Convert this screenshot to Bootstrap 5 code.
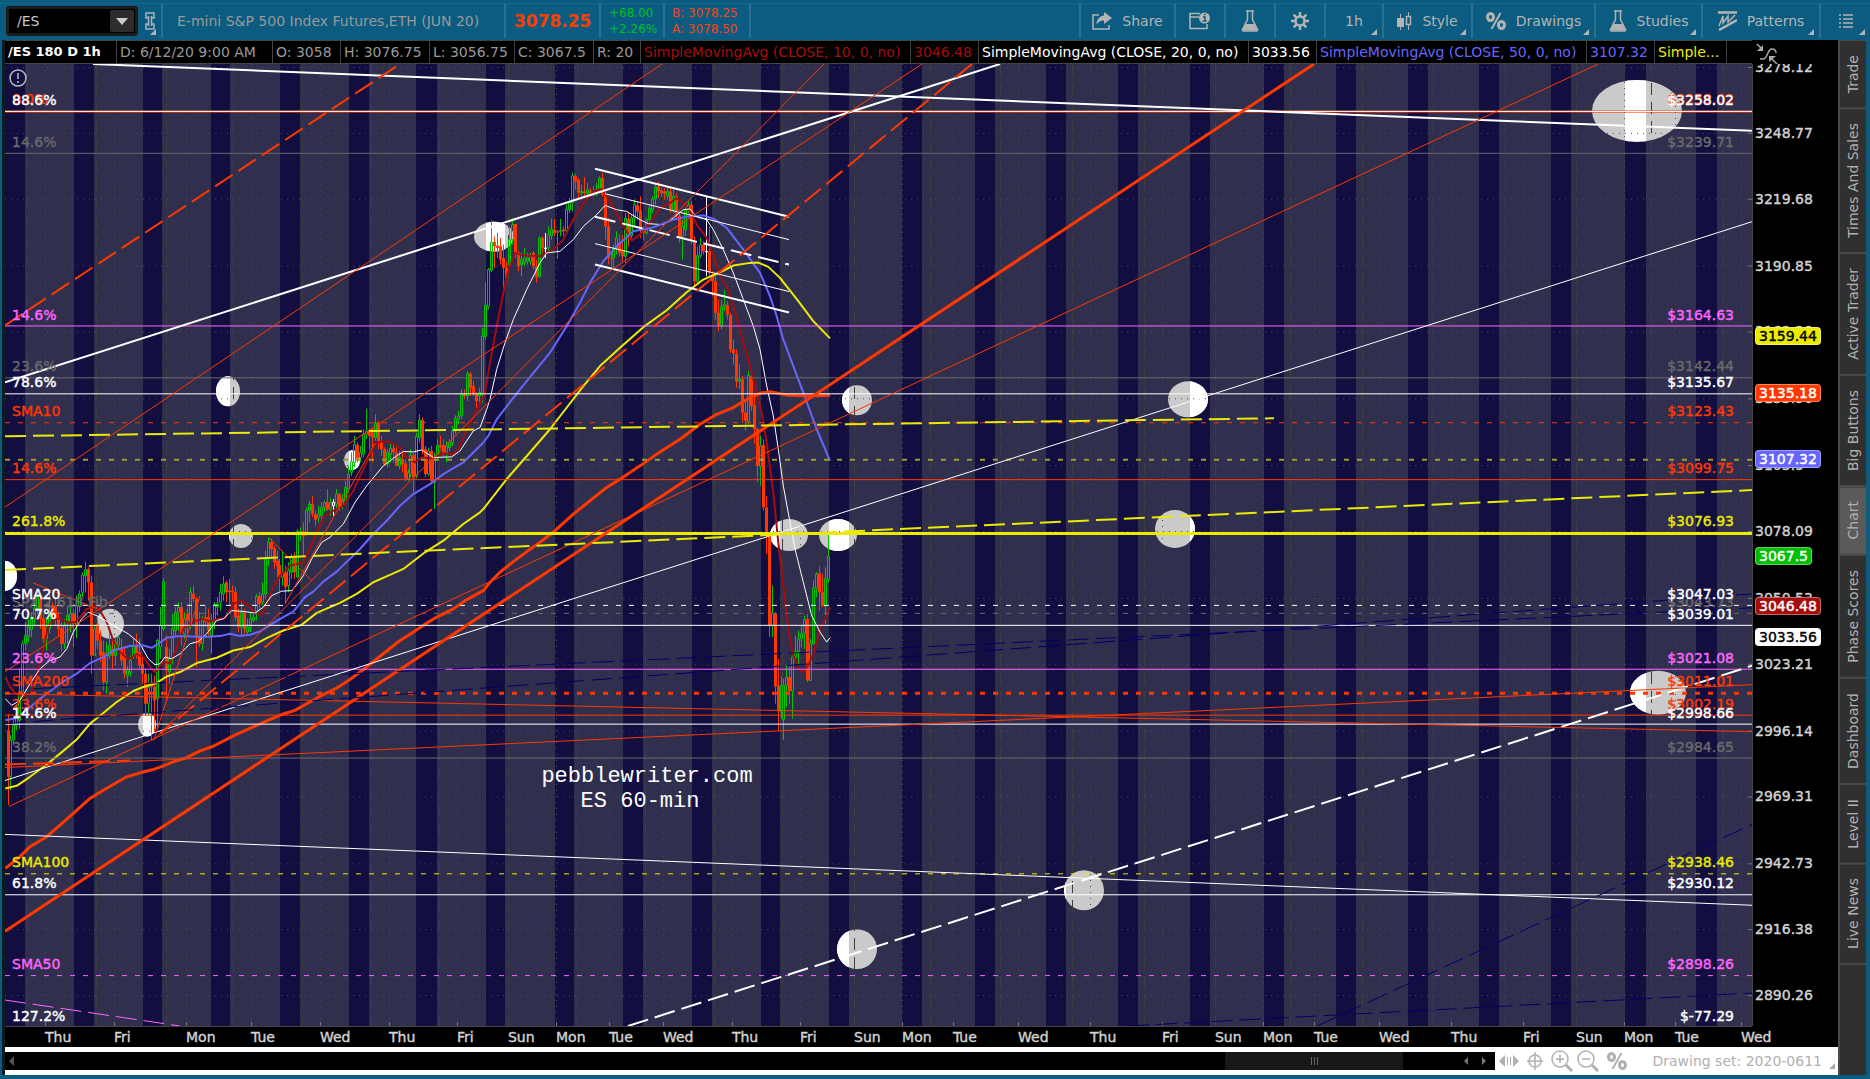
<!DOCTYPE html>
<html lang="en">
<head>
<meta charset="utf-8">
<meta name="viewport" content="width=device-width, initial-scale=1">
<title>/ES 180 D 1h chart</title>
<link href="https://cdn.jsdelivr.net/npm/bootstrap@5.3.0/dist/css/bootstrap.min.css" rel="stylesheet">
<style>
body{background:#0b5c80;color:#b4b4b4;font:14px/20px "DejaVu Sans",sans-serif;overflow:hidden}
.toolbar{height:40px;box-shadow:inset 0 3px 0 #0b5c80,inset 0 4px 0 #14678c}
.toolbar .tool{border:0;border-left:2px solid #2b7192;border-radius:0;background:none;color:#b4b4b4;padding:0;font:inherit;position:relative;height:34px;margin-top:4px;display:flex;align-items:center;justify-content:center;gap:10px;white-space:nowrap;flex:none}
.toolbar .more::after,.corner::after{content:"";position:absolute;right:5px;bottom:3px;border-left:6px solid transparent;border-bottom:6px solid #b4b4b4}
.symbol{width:132px;height:30px;margin:6px 0 0 6px;border:3px solid #1c1c1c;border-radius:3px;background:#000}
.symbol input{width:101px;border:0;background:none;color:#c8c8c8;padding:0 8px;outline:0}
.symbol button{width:24px;height:22px;margin-top:1px;border:0;border-radius:2px;background:#2d2d2d;padding:0;display:grid;place-items:center}
.w-link{width:23px;border:0!important}
.quote{border-left:2px solid #2b7192;height:34px;margin-top:4px;flex:none;display:flex;align-items:center;white-space:nowrap}
.q-name{width:343px;padding-left:14px;color:#999}
.q-last{width:95px;padding-left:8px;color:#ff3c00;font-size:17px}
.q-pair{width:64px;padding-left:8px;font-size:12px;line-height:16px}
.q-book{width:86px;padding-left:7px;font-size:12px;line-height:16px;color:#ff4012}
.green{color:#00c020}
.t-95{width:95px}.t-50{width:50px}.t-58{width:58px}.t-89{width:89px}.t-123{width:123px}.t-107{width:107px}.t-118{width:118px}.t-51{width:51px}
.frame{margin-left:2px;background:#000;border-left:3px solid #0c1a22}
.study-bar{height:24px;border-top:1px solid #444;border-bottom:1px solid #444;color:#999;overflow:hidden}
.study-bar>span{border-right:1px solid #444;padding-left:3px;line-height:22px;white-space:nowrap;flex:none;overflow:hidden}
.s-title{width:112px;color:#fff;font-size:13px}.s-date{width:156px}.s-68{width:68px}.s-89{width:89px}.s-85{width:85px}.s-79{width:79px}.s-47{width:47px}.s-avg{width:270px}.s-cut{width:72px}
.price-col{width:86px;flex:none}
.plot{position:relative;overflow:hidden}
.plot svg.drawing{position:absolute;width:100%;height:100%;left:0;top:0}
.drawing *{vector-effect:non-scaling-stroke}
.tag{position:absolute;line-height:16px;transform:translateY(-50%);white-space:nowrap;-webkit-text-stroke:.4px}
.tag-left{left:7px}.tag-right{right:18px}
.note{position:absolute;color:#fff;font:22px/26px "Liberation Mono",monospace;text-align:center;transform:translate(-50%,-50%);white-space:nowrap}
.prices{position:relative;overflow:hidden;border-left:1px solid #444;color:#d2d2d2}
.prices .tag{left:2px}
.prices .bubble{left:2px;padding:0 3px;border-radius:4px;border:1px solid #ffffff60}
.warn{position:absolute;left:4px;top:5px}
.dates{position:relative;height:21px;border-top:1px solid #444;color:#d2d2d2}
.dates span{position:absolute;top:0;line-height:20px;-webkit-text-stroke:.4px}
.foot{height:28px;background:#fff;color:#b0b0b0}
.scroller{height:18px;margin:5px 0;background:#000;position:relative}
.scroller .grip{position:absolute;left:81.9%;width:11.9%;height:18px;background:#181818;display:grid;place-items:center}
.scroller svg{position:absolute;top:4px}
.foot-tools{width:343px;flex:none;position:relative}
.foot-tools button{border:0;background:none;padding:0;line-height:0}
.foot-tools::after{right:3px;bottom:6px;border-bottom-color:#aaa}
.tabs{width:28px;flex:none;background:#303030;border-left:2px solid #4a4a4a;border-top:1px solid #4a4a4a;margin-right:4px}
.tabs a{writing-mode:vertical-rl;transform:rotate(180deg);width:26px;padding:14px 0;line-height:26px;color:#b0b0b0;text-decoration:none;border-top:2px solid #4a4a4a;display:block;text-align:center}
.tabs a.on{background:#5a5a5a}
</style>
<script src="https://cdn.jsdelivr.net/npm/bootstrap@5.3.0/dist/js/bootstrap.bundle.min.js"></script>
</head>
<body class="vh-100 d-flex flex-column">
<svg width="0" height="0" class="position-absolute">
  <symbol id="flask" viewBox="0 0 18 22"><path d="M5 1h8M6.500 1.500v8L1.500 19.500q-.5 1.500 1 1.500h13q1.500 0 1-1.500L11.500 9.500v-8" fill="none" stroke="#b4b4b4" stroke-width="1.500"/><path d="M4.500 14h9l3 6.500h-15z" fill="#b4b4b4"/></symbol>
</svg>
<header class="toolbar d-flex">
  <div class="symbol d-flex"><input aria-label="Symbol" value="/ES"><button type="button" aria-label="Symbol list"><svg width="12" height="7"><path d="M0 0h12L6 7z" fill="#ccc"/></svg></button></div>
  <button class="tool more w-link" type="button" aria-label="Link"><svg width="10" height="18" fill="none" stroke="#a8b4ba" stroke-width="1.500"><path d="M4 6H1V1h8v5H6M4 12H1v5h8v-5H6M3.500 4v10M6.500 4v10"/></svg></button>
  <div class="quote q-name">E-mini S&amp;P 500 Index Futures,ETH (JUN 20)</div>
  <div class="quote q-last fw-bold">3078.25</div>
  <div class="quote q-pair green">+68.00<br>+2.26%</div>
  <div class="quote q-book">B: 3078.25<br>A: 3078.50</div>
  <div class="quote flex-fill"></div>
  <button class="tool t-95" type="button"><svg width="20" height="18"><path d="M7 3H1v14h16v-4" fill="none" stroke="#b4b4b4" stroke-width="1.500"/><path d="M12 0l8 6-8 6V8.500C8 8.500 6 10 4.500 13 4.500 7 8 4 12 3.500z" fill="#b4b4b4"/></svg>Share</button>
  <button class="tool t-50" type="button" aria-label="Chart info"><svg width="22" height="18"><path d="M11 1.500H1v15h17V12M1 5h9" fill="none" stroke="#b4b4b4" stroke-width="1.500"/><circle cx="15.500" cy="6" r="5.500" fill="#b4b4b4"/><path d="M14 5h2v4m-2.500 0h4M15 2.500h1.500" stroke="#0b5c80" stroke-width="1.500" fill="none"/></svg></button>
  <button class="tool t-50" type="button" aria-label="Lab"><svg width="18" height="22"><use href="#flask"/></svg></button>
  <button class="tool t-50" type="button" aria-label="Settings"><svg width="18" height="18" viewBox="-9 -9 18 18" fill="none" stroke="#b4b4b4"><circle r="4.500" stroke-width="2.500"/><path d="M0-9v4M0 5v4M-9 0h4M5 0h4M-6.400-6.400l3 3M3.400 3.400l3 3M-6.400 6.400l3-3M3.400-3.400l3-3" stroke-width="2.500"/></svg></button>
  <button class="tool more t-58" type="button">1h</button>
  <button class="tool more t-89" type="button"><svg width="15" height="18"><path d="M3.500 2v16M11.500 0v18" stroke="#b4b4b4"/><path d="M0 6h7v9H0z" fill="#b4b4b4"/><path d="M9.500 4.500h4v8h-4z" fill="#0b5c80" stroke="#b4b4b4" stroke-width="1.500"/></svg>Style</button>
  <button class="tool more t-123" type="button"><svg width="20" height="18" fill="none" stroke="#b4b4b4" stroke-width="3"><ellipse cx="4.500" cy="5" rx="3" ry="3.500"/><ellipse cx="15.500" cy="13" rx="3" ry="3.500"/><path d="M14.500 1l-9 16" stroke-width="2"/></svg>Drawings</button>
  <button class="tool more t-107" type="button"><svg width="18" height="22"><use href="#flask"/></svg>Studies</button>
  <button class="tool more t-118" type="button"><svg width="19" height="20" fill="none" stroke="#b4b4b4"><path d="M0 1.500h19M1 19L19 9" stroke-width="2.500"/><path d="M1 15L5 5v7l5-7v6l7-7" stroke-width="1.500"/></svg>Patterns</button>
  <button class="tool more t-51" type="button" aria-label="Menu"><svg width="14" height="14" stroke="#b4b4b4" stroke-width="1.500"><path d="M0 1h2M4 1h10M0 5h2M4 5h10M0 9h2M4 9h10M0 13h2M4 13h10"/></svg></button>
</header>
<main class="d-flex flex-fill overflow-hidden">
  <section class="frame d-flex flex-column flex-fill">
    <div class="d-flex">
      <div class="study-bar d-flex flex-fill">
        <span class="s-title fw-bold">/ES 180 D 1h</span><span class="s-date">D: 6/12/20 9:00 AM</span><span class="s-68">O: 3058</span><span class="s-89">H: 3076.75</span><span class="s-85">L: 3056.75</span><span class="s-79">C: 3067.5</span><span class="s-47">R: 20</span>
        <span class="s-avg" data-c="#a50d0d">SimpleMovingAvg (CLOSE, 10, 0, no)</span><span class="s-68" data-c="#a50d0d">3046.48</span>
        <span class="s-avg" data-c="#fff">SimpleMovingAvg (CLOSE, 20, 0, no)</span><span class="s-68" data-c="#fff">3033.56</span>
        <span class="s-avg" data-c="#6666ff">SimpleMovingAvg (CLOSE, 50, 0, no)</span><span class="s-68" data-c="#6666ff">3107.32</span>
        <span class="s-cut" data-c="#ebeb00">Simple...</span>
      </div>
      <div class="price-col ps-1"><svg width="24" height="24" fill="none" stroke="#aaa" stroke-width="1.500"><path d="M4 19h3c5 0 4-10 9-10q4 0 4 4M1 4l5 5"/><path d="M7 5v6H1zM13 16h7l-7 6z" fill="#aaa" stroke="none"/><path d="M15 18l6 6"/></svg></div>
    </div>
    <div class="d-flex flex-fill">
      <div class="plot flex-fill" id="plot">
        <svg class="drawing" id="drawing" viewBox="5 64 1747 964" preserveAspectRatio="none"></svg>
        <svg class="warn" width="18" height="18" fill="none" stroke="#bbb" stroke-width="1.500"><circle cx="9" cy="9" r="8"/><path d="M9 4v6M9 12v2"/></svg>
      </div>
      <div class="price-col prices" id="prices"></div>
    </div>
    <div class="d-flex"><div class="dates flex-fill" id="dates"></div><div class="price-col"></div></div>
    <div class="foot d-flex">
      <div class="scroller flex-fill">
        <svg width="6" height="10" class="start-0 ms-1"><path d="M5 0v10L0 5z" fill="#555"/></svg>
        <div class="grip"><svg class="position-static" width="8" height="8" stroke="#666"><path d="M1.500 0v8M4.500 0v8M7.500 0v8"/></svg></div>
        <svg width="24" height="10" class="end-0 me-2"><path d="M5 1v8L1 5zM19 1v8L23 5z" fill="#777"/></svg>
      </div>
      <div class="foot-tools corner d-flex align-items-center ps-1">
        <button type="button" aria-label="Fit width"><svg width="20" height="12" fill="#b0b0b0"><path d="M6 0v12L0 6zM14 0v12L20 6zM8 2h1v8H8zM11 2h1v8h-1z"/></svg></button>
        <button type="button" class="ms-2" aria-label="Crosshair"><svg width="16" height="18" viewBox="1 0 16 18" fill="none" stroke="#b0b0b0" stroke-width="1.500"><circle cx="9" cy="9" r="6"/><path d="M9 0v18M0 9h18"/></svg></button>
        <button type="button" class="ms-2" aria-label="Zoom in"><svg width="22" height="22" fill="none" stroke="#b0b0b0" stroke-width="1.500"><circle cx="9" cy="9" r="8"/><path d="M9 5v8M5 9h8"/><path d="M15 15l6 6" stroke-width="3"/></svg></button>
        <button type="button" class="ms-1" aria-label="Zoom out"><svg width="22" height="22" fill="none" stroke="#b0b0b0" stroke-width="1.500"><circle cx="9" cy="9" r="8"/><path d="M5 9h8"/><path d="M15 15l6 6" stroke-width="3"/></svg></button>
        <button type="button" class="ms-2" aria-label="Percent"><svg width="20" height="18" fill="none" stroke="#b0b0b0" stroke-width="3"><ellipse cx="4.500" cy="5" rx="3" ry="3.500"/><ellipse cx="15.500" cy="13" rx="3" ry="3.500"/><path d="M14.500 1l-9 16" stroke-width="2"/></svg></button>
        <span class="ms-auto me-3">Drawing set: 2020-0611</span>
      </div>
    </div>
  </section>
  <nav class="tabs" aria-label="Gadgets"><a href="#">Trade</a><a href="#">Times And Sales</a><a href="#">Active Trader</a><a href="#">Big Buttons</a><a href="#" class="on">Chart</a><a href="#">Phase Scores</a><a href="#">Dashboard</a><a href="#">Level II</a><a href="#">Live News</a></nav>
</main>
<footer class="pt-1"></footer>
<script>
const X0=5,Y0=64,W=1747,H=964;
const RED='#ff3800',WHITE='#fff',GRAY='#6a6a6a',PINK='#ff66ff',YEL='#ebeb00',NAVY='#000066',BLUE='#6666ff',DARK='#a50d0d',GREEN='#00c400';
const out=[];
const line=(x1,y1,x2,y2,c,w=1,dash='')=>out.push(`<path d="M${x1} ${y1}L${x2} ${y2}" stroke="${c}" stroke-width="${w}" stroke-dasharray="${dash}"/>`);
document.querySelectorAll('[data-c]').forEach(e=>e.style.color=e.dataset.c);

// overnight session bands
const bands=[[5,25],[74,94],[143,162],[211,230],[280,300],[349,369],[416,437],[486,505],[555,574],[623,643],[692,712],[761,780],[829,849],[902,922],[975,995],[1046,1066],[1118,1138],[1190,1210],[1264,1284],[1336,1356],[1408,1428],[1479,1499],[1551,1571],[1625,1646],[1696,1717]];
const bandRects=bands.map(([a,b])=>`<rect x="${a}" y="64" width="${b-a}" height="964"/>`).join('');
out.push(`<clipPath id="night">${bandRects}</clipPath><rect x="5" y="64" width="1747" height="964" fill="#312f4e"/><g fill="#120f40">${bandRects}</g>`);

// highlight ellipses
const spots=[[494,237,20,15],[228,392,12,15],[352,461,8,10],[241,537,12,12],[5,577,12,15],[110,625,14,15],[147,726,9,12],[857,401,15,15],[789,536,19,16],[838,536,19,16],[1188,400,20,18],[1175,530,20,19],[1084,892,20,20],[857,951,20,20],[1637,111,45,31],[1658,694,28,22]].map(([x,y,a,b])=>`<ellipse cx="${x}" cy="${y}" rx="${a}" ry="${b}"/>`).join('');
out.push(`<g fill="#cacaca">${spots}</g><g fill="#fff" clip-path="url(#night)">${spots}</g>`);

// grid
[27,96,166,233,302,371,439,508,577,645,714,782,854,930,1000,1072,1144,1215,1290,1362,1433,1505,1576,1651,1723].forEach(x=>line(x+.5,64,x+.5,1028,'#3e3e40',1,'12 7'));
const days=[['Thu',45],['Fri',114],['Mon',186],['Tue',251],['Wed',320],['Thu',389],['Fri',457],['Sun',508],['Mon',556],['Tue',609],['Wed',663],['Thu',732],['Fri',800],['Sun',854],['Mon',902],['Tue',953],['Wed',1018],['Thu',1090],['Fri',1162],['Sun',1215],['Mon',1263],['Tue',1314],['Wed',1379],['Thu',1451],['Fri',1523],['Sun',1576],['Mon',1624],['Tue',1675],['Wed',1741]];
days.forEach(([d,x])=>{ if(d!=='Sun'){line(x+.5,64,x+.5,1028,'#4c4c48',1,'1 5');line(x+.5,1024,x+.5,1028,'#777')} });
const ticks=[['3278.12',67],['3248.77',133],['3219.68',199],['3190.85',266],['3162.20',332],['3133.96',399],['3105.9',466],['3078.09',532],['3050.53',599],['3023.21',665],['2996.14',732],['2969.31',798],['2942.73',865],['2916.38',931],['2890.26',997]];
ticks.forEach(([,y])=>{line(5,y+.5,1752,y+.5,'#4c4c48',1,'1 5');line(1748,y+.5,1752,y+.5,'#777')});

// coordinates below are in thirds of a unit, with an origin per group
const path=(c,w,...parts)=>{
  const pts=parts.map(([ox,oy,s])=>s.split(' ').map(p=>{const [x,y]=p.split(',');return (ox+x/3).toFixed(1)+' '+(oy+y/3).toFixed(1)}).join('L')).join('L');
  out.push(`<path d="M${pts}" fill="none" stroke="${c}" stroke-width="${w}" stroke-linejoin="round"/>`);
};
const candles=(ox,oy,s)=>s.trim().split(/\s+/).forEach(k=>{
  const [x,h,t,b,l,c]=k.split(','), cx=Math.floor(ox+x/3)+.5, Y=v=>+(oy+v/3).toFixed(1);
  if(c==='r') out.push(`<path d="M${cx} ${Y(h)}V${Y(l)}" stroke="${RED}"/><rect x="${cx-1.5}" y="${Y(t)}" width="3" height="${Math.max(1,Y(b)-Y(t))}" fill="${RED}"/>`);
  else{const col=c==='w'?WHITE:GREEN;out.push(`<path d="M${cx} ${Y(h)}V${Y(t)}M${cx} ${Y(b)}V${Y(l)}M${cx-1} ${Y(t)}h2V${Y(b)}h-2z" stroke="${col}" fill="none"/>`)}
});

candles(0,560,`25,465,515,655,740,r 32,530,545,655,695,g 41,480,500,545,560,g 50,440,470,500,515,g 59,330,400,485,510,g 68,245,255,400,415,g 77,190,230,255,275,g 86,180,205,235,250,g 95,160,175,212,235,g 104,130,150,180,200,g 113,95,112,150,165,g 122,105,120,180,210,r 131,165,178,240,255,r 140,180,205,240,275,g 149,100,165,210,225,g 158,130,140,170,180,r 167,115,140,180,200,r 176,160,175,210,235,r 185,190,208,255,278,r 194,180,200,255,270,g 203,145,170,190,255,g 212,130,165,190,220,g 221,150,165,195,265,r 230,110,140,195,238,g 239,95,105,140,160,g 248,40,48,100,115,g 257,8,32,50,100,g 266,25,30,70,125,r 275,50,70,290,345,r 284,200,210,290,290,g 293,180,195,245,270,r 302,215,245,290,310,r 311,245,280,370,395,r 320,250,290,370,405,g 329,215,260,290,300,g 338,240,270,290,330,r 347,235,250,290,320,g 356,230,235,260,270,g 365,240,270,305,320,r 374,260,285,345,360,r 383,320,335,350,385,g 392,290,305,340,355,g 401,240,260,290,300,g 410,225,260,290,300,r 419,240,280,320,330,r 428,290,315,345,375,r 437,330,345,435,470,r 446,345,385,435,470,g 455,345,370,385,545,r 464,350,385,425,520,r 473,240,245,420,510,g 482,145,200,265,300,g 491,58,68,210,215,g 500,230,265,335,425,r 509,270,300,340,375,g 518,165,210,300,315,g 527,145,160,215,235,g 536,130,145,160,215,g 545,130,145,225,260,r 554,160,180,225,240,g 563,145,165,185,225,r 572,85,100,195,210,g 581,80,105,120,130,r 590,115,120,235,325,r 599,160,230,255,265,r 608,170,185,255,275,g 617,140,175,190,205,r 626,150,175,215,230,r 635,165,185,230,285,g 644,130,137,190,210,g 653,115,135,145,170,g 662,75,100,130,155,g 671,52,75,105,125,g 680,65,70,100,130,r 689,60,95,100,140,r 698,80,95,100,130,r 707,85,100,175,185,r 716,150,170,205,220,r 725,130,160,205,230,g 734,150,160,210,225,r 743,180,205,220,230,g 752,160,180,205,220,g 761,160,175,185,190,g 770,105,112,160,185,g 779,100,112,135,150,r 788,70,105,130,140,g`);
candles(0,130,`797,1265,1290,1395,1410,g 806,1225,1240,1290,1310,g 815,1228,1240,1260,1290,r 824,1250,1258,1300,1320,r 833,1265,1295,1310,1345,r 839,1290,1308,1345,1390,r 848,1265,1335,1345,1370,g 857,1310,1330,1375,1425,r 866,1300,1325,1370,1390,g 875,1275,1285,1330,1350,g 884,1270,1280,1330,1350,r 893,1200,1207,1345,1345,g 902,1195,1207,1210,1235,g 911,1180,1207,1222,1280,r 920,1135,1145,1215,1220,g 929,1115,1125,1145,1180,g 938,1100,1125,1155,1165,r 947,1145,1155,1172,1190,r 956,1130,1155,1165,1180,g 965,1120,1135,1160,1175,g 974,1115,1120,1135,1150,g 983,1080,1120,1142,1145,r 992,1105,1120,1140,1160,g 1000,1110,1120,1130,1160,w 1009,1080,1095,1125,1140,g 1018,1090,1095,1135,1145,r 1027,1095,1110,1130,1140,g 1036,1055,1075,1115,1125,g 1045,1010,1035,1080,1090,g 1054,970,998,1030,1040,g 1063,920,945,1000,1015,g 1072,940,947,988,1000,r 1081,950,970,985,1000,g 1090,900,915,975,985,g 1099,838,905,915,930,g 1108,900,905,920,960,r 1117,895,910,925,1000,r 1126,855,882,925,935,g 1135,875,880,935,960,r 1144,920,935,960,980,r 1153,955,960,1005,1010,r 1162,960,970,1005,1015,g 1171,945,958,975,1000,g 1180,945,958,970,1000,r 1189,955,970,1010,1012,r 1198,965,985,1010,1020,g 1207,965,990,1005,1030,r 1216,990,1003,1048,1055,r 1225,1020,1030,1050,1055,g 1232,960,978,1035,1045,g 1241,970,978,1045,1090,r 1250,910,922,1040,1048,g 1259,855,872,925,940,g 1268,865,873,962,975,r 1277,950,960,1035,1045,r 1286,955,965,1035,1040,g 1295,950,965,1055,1060,r 1304,970,985,1060,1140,g 1313,930,948,985,990,g 1322,920,948,955,960,r 1331,930,948,975,985,r 1340,935,950,970,1000,g 1349,930,940,955,965,g 1358,890,905,940,950,g 1367,858,868,905,915,g 1376,845,860,870,885,g 1385,780,795,860,870,g 1394,780,795,800,810,r 1402,725,733,800,815,g 1411,728,733,775,800,r 1420,755,770,795,800,r 1429,790,795,815,835,r 1438,775,790,800,820,g 1447,595,620,795,820,g 1456,458,527,622,630,g 1465,415,420,530,540,g 1474,272,338,422,428,g`);
candles(440,130,`163,320,337,350,415,r 173,310,348,355,385,r 182,325,350,390,405,r 191,345,385,415,475,r 200,395,415,445,455,r 209,290,330,405,420,g 218,265,285,330,345,g 227,283,283,375,385,r 236,365,370,410,425,r 245,370,390,405,440,g 254,355,385,400,410,g 263,370,385,395,405,g 272,370,378,395,405,g 281,365,370,410,420,r 290,390,410,443,460,r 299,320,325,440,445,g 308,320,325,355,370,r 317,310,355,357,385,w 326,290,315,355,370,g 335,268,300,318,330,g 344,268,300,310,320,r 353,300,305,308,388,r 362,268,303,305,320,g 371,290,300,305,320,r 380,225,238,303,315,g 389,205,218,240,250,g 398,128,138,220,245,g 407,132,138,155,180,r 416,145,150,188,205,r 425,165,185,190,205,g 434,142,185,190,200,r 443,160,180,192,198,g 452,175,183,192,200,r 461,170,185,190,200,r 470,160,180,190,200,g 478,140,145,180,190,g 486,130,145,195,200,r 495,185,195,290,330,r 504,265,290,385,405,r 513,370,385,388,410,r 521,345,355,385,415,g 530,305,325,355,375,g 539,315,340,370,380,r 548,315,365,380,395,r 557,250,265,380,400,g 566,250,268,318,350,r 575,255,265,318,330,g 584,210,225,265,290,g 593,215,227,245,270,r 602,200,242,300,325,r 611,290,300,310,330,r 620,265,270,310,315,g 629,225,235,270,285,g 638,200,208,240,250,g 647,165,172,208,225,g 656,155,170,185,205,r 665,175,182,190,200,r 674,175,185,192,210,r 683,170,185,200,210,g 692,170,185,240,250,r 701,180,200,240,250,g 710,190,200,258,270,r 719,250,258,322,340,r 728,270,290,320,390,g 737,230,240,300,320,g 746,215,225,240,250,g 755,215,225,330,345,r 764,320,335,455,470,r 773,350,378,455,460,g 782,325,345,378,385,g 791,335,345,365,375,r 799,200,365,367,440,w 808,290,365,430,440,r 817,425,435,455,500,r 826,430,455,550,570,r 835,510,550,590,605,r 844,510,530,590,600,g 853,480,525,532,545,g 862,515,527,555,570,r 871,550,557,660,670,r 880,630,660,672,705,r 889,660,673,757,775,r 898,705,750,755,780,g 907,740,750,850,880,r 916,815,850,875,905,r 925,725,738,878,885,g 934,735,740,830,845,r 943,800,828,900,945,r 952,895,900,1010,1060,r 961,920,950,1012,1070,g 970,930,948,1135,1145,r 979,1100,1135,1220,1275,r 988,1210,1215,1490,1525,r`);
candles(440,520,`997,200,283,320,355,g 1006,280,285,503,555,r 1015,420,500,578,635,r 1024,475,500,580,600,g 1030,480,500,602,663,g 1039,440,475,500,565,g 1048,440,475,517,555,r 1057,400,415,517,600,g 1066,350,398,415,425,g 1075,335,360,398,435,g 1084,320,345,360,385,g 1093,290,302,345,390,g 1102,285,300,485,490,r 1111,360,375,485,487,g 1120,183,208,375,378,g 1129,160,165,208,235,g 1138,142,163,220,275,r 1147,165,220,262,265,r 1156,145,178,262,315,g 1165,48,112,182,190,g`);

// moving averages
path(DARK,2,[0,560,'16,355 30,385 45,403 70,415 95,400 110,350 130,270 145,200 165,182 180,178 200,190 225,190 245,170 260,150 285,143 300,155 320,190 340,245 360,280 385,302 410,285 430,295 450,325 465,340 490,310 510,313 530,270 550,210 575,190 605,180 630,188 655,180 675,178 700,135 725,125 745,140 765,162 785,168 800,135 820,85 840,50'],[0,130,'870,1310 910,1300 940,1235 970,1165 1000,1145 1030,1130 1060,1085 1090,1020 1125,945 1140,937 1170,938 1200,955 1220,985 1245,1000 1265,985 1300,988 1330,972'],[440,130,'40,975 60,950 80,900 110,845 135,790 150,700 170,590 200,440 225,370 250,378 300,380 340,360 370,330 400,270 430,220 460,185 485,178 510,215 545,280 575,332 600,315 630,280 660,235 690,220 710,205 730,220 750,245 770,285 800,325 820,375 840,440 860,470 880,530 905,620 925,690 945,770 965,850 980,940 1000,1090 1015,1240'],[440,520,'1030,200 1045,330 1060,410 1075,450 1088,460 1105,440 1120,405 1140,330 1155,300 1170,265']);
path(WHITE,1,[0,560,'16,420 35,440 60,425 90,375 120,330 150,305 180,295 200,270 220,220 245,180 265,160 300,175 340,200 385,225 420,255 445,300 465,318 480,315 495,295 515,300 540,285 570,255 595,248 620,225 650,185 670,180 695,155 735,158 765,163 790,145 815,110 845,97 875,95 890,78 910,50'],[0,130,'935,1290 965,1240 990,1225 1030,1185 1065,1120 1100,1070 1150,1010 1190,980 1210,967 1240,968 1265,962 1300,985 1355,983 1380,965 1420,905 1440,895 1460,840'],[440,130,'150,810 170,720 195,640 220,570 260,480 300,400 320,370 360,365 400,330 430,290 470,255 495,227 530,240 560,245 600,270 625,282 670,285 700,265 730,240 750,238 770,262 800,270 820,300 850,360 880,430 910,510 940,590 960,660 980,770 1000,860 1015,960 1030,1070 1050,1180'],[440,520,'1065,90 1090,190 1115,290 1140,340 1160,370 1170,357']);
path(BLUE,2,[0,560,'16,485 50,478 80,455 110,428 140,405 180,375 230,345 270,313 310,295 340,275 390,262 430,260 455,267 475,255 500,237 540,232 610,235 660,232 690,225 720,232 750,228 780,218 820,192 850,175 880,158 915,115 940,98 970,68 1010,38'],[0,130,'1080,1260 1120,1215 1160,1175 1200,1130 1240,1095 1290,1065 1330,1035 1390,1000 1450,940'],[440,130,'145,920 170,870 240,780 330,670 380,590 420,520 450,460 490,395 530,350 580,305 640,293 700,270 745,260 790,257 820,267 860,295 910,360 960,430 990,500 1010,560 1030,630 1060,710 1090,790 1130,900 1170,995']);
path(YEL,2,[0,560,'16,690 50,682 90,655 140,618 190,577 230,543 270,495 310,463 350,430 400,397 430,385 470,373 500,353 540,340 590,313 650,297 700,275 750,265 800,238 850,215 905,198 950,162 1020,132 1070,105 1120,70 1170,48'],[0,130,'1210,1320 1275,1270 1330,1235 1390,1185 1440,1150'],[440,130,'130,1140 200,1050 330,900 430,770 480,710 540,655 610,593 680,542 740,488 790,450 840,428 880,408 930,400 955,399 985,412 1020,445 1075,515 1120,575 1170,627']);
path(RED,3,[0,560,'16,930 60,895 90,865 140,835 180,800 220,765 270,720 310,695 380,655 420,643 460,633 490,622 520,610 560,597 600,577 640,563 700,532 760,505 800,487 850,466 885,455 930,430 965,410 1010,388 1050,362 1100,325 1150,285 1200,245 1240,220 1280,193 1310,175 1360,150 1400,122 1450,95'],[440,520,'150,190 180,160 220,128 260,98 300,70'],[440,130,'345,1205 400,1155 450,1115 500,1075 540,1050 600,1010 660,968 720,930 780,885 830,855 880,835 930,805 960,792 990,787 1040,797 1100,800 1170,798']);

// price levels: left text, right text, line y, colour, width, dash, label y
const D='5 8';
const levels=[
 ['0.0%','$3258.02',111,RED,3,'',99],['88.6%','$3258.02',111,WHITE,1,'',100],['14.6%','$3239.71',153,GRAY,1],['14.6%','$3164.63',326,PINK,1],['23.6%','$3142.44',378,GRAY,1],['78.6%','$3135.67',394,WHITE,1],['SMA10','$3123.43',423,RED,1,D],['','',460,'#9c9c2c',2,D],['14.6%','$3099.75',480,RED,1],['SPX 2.618 Fib','$3043.73',614,GRAY,1,D],['SMA20','$3047.03',606,WHITE,1,D],['70.7%','$3039.01',626,WHITE,1],['23.6%','$3021.08',670,PINK,1],['SMA200','$3011.01',694,RED,3,D,682],['23.6%','$3002.19',716,RED,1],['14.6%','$2998.66',725,WHITE,1],['38.2%','$2984.65',759,GRAY,1],['SMA100','$2938.46',875,YEL,1,D],['61.8%','$2930.12',896,WHITE,1],['SMA50','$2898.26',977,PINK,1,D],['127.2%','$-77.29',1029,WHITE,0],['261.8%','$3076.93',534,YEL,3,'',522]];
levels.forEach(([,,y,c,w,d='' ],i)=>{ if(w) out.push(`<path d="M5 ${y+.5}H1752" stroke="${c}" stroke-width="${w}" stroke-dasharray="${d}"${i?'':' opacity=".55"'}/>`)});

// trend lines
const L='21 7';
line(5,383,1000,64,WHITE,2);line(93,64,1752,131,WHITE,2);line(5,782,1752,222,WHITE);line(5,836,1752,907,WHITE);line(628,1028,1752,667,WHITE,2,L);
line(595,169,789,217,WHITE,2);line(605,194,789,240,WHITE);line(595,217,789,265,WHITE,2,L);line(595,244,789,292,WHITE);line(595,265,789,313,WHITE,2);
line(5,933,1314,64,RED,3);line(5,508,662,64,RED);line(153,742,824,64,RED);line(5,673,922,64,RED);line(9,808,1598,64,RED);line(154,741,200,597,RED);line(33,584,97,610,RED);line(269,539,312,582,RED);line(285,605,375,444,RED);
line(5,695,1752,733,RED);line(5,769,1752,686,RED);line(5,766,130,762,RED,2,L);line(5,326,400,64,RED,2,L);line(972,64,160,735,RED,2,L);
line(5,437,1274,419,YEL,2,L);line(5,571,1752,491,YEL,2,L);
line(33,690,1752,609,NAVY,1,L);line(5,725,1752,595,NAVY,1,L);line(1317,1028,1752,826,NAVY,1,L);line(1128,1028,1752,995,NAVY,1,L);line(5,1002,180,1028,PINK,1,L);
document.getElementById('drawing').innerHTML=out.join('');

// text over the chart and on the axes
const plot=document.getElementById('plot'),prices=document.getElementById('prices'),dates=document.getElementById('dates');
const put=(host,cls,txt,css)=>{const e=document.createElement('span');e.className=cls;e.textContent=txt;Object.assign(e.style,css);host.append(e)};
const py=y=>((y-Y0)/H*100).toFixed(2)+'%',px=x=>((x-X0)/W*100).toFixed(2)+'%';
levels.forEach(([a,b,y,c,,,ly])=>{const top=py(ly||y-11);if(a)put(plot,'tag tag-left',a,{top,color:c});if(b)put(plot,'tag tag-right',b,{top,color:c})});
put(plot,'note','pebblewriter.com',{left:px(647),top:py(778)});
put(plot,'note','ES 60-min',{left:px(640),top:py(804)});
ticks.forEach(([t,y])=>put(prices,'tag',t,{top:py(y)}));
[['3159.44',337,YEL,'#000'],['3135.18',394,RED,WHITE],['3107.32',460,BLUE,WHITE],['3067.5',557,'#00be00',WHITE],['3046.48',607,DARK,WHITE],['3033.56',638,WHITE,'#000']].forEach(([t,y,bg,c])=>put(prices,'tag bubble',t,{top:py(y),background:bg,color:c}));
days.forEach(([d,x])=>put(dates,'',d,{left:px(x)}));
</script>
</body>
</html>
